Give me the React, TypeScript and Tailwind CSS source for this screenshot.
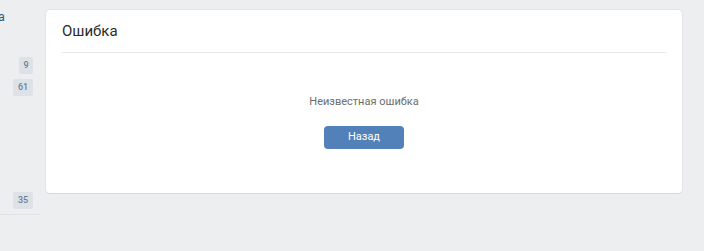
export default function App() {
  return (
    <div
      className="flex h-[251px] w-[704px] overflow-hidden bg-[#edeef0]"
      style={{ fontFamily: "Roboto, 'Open Sans', 'Liberation Sans', sans-serif" }}
    >
      {/* левое меню */}
      <div className="flex w-[40px] shrink-0 flex-col">
        <div className="-ml-[2px] mt-[9px] h-[15px] text-[12.5px] leading-[15px] text-[#2a5885]">а</div>
        <div className="flex flex-col items-end gap-[5px] pr-[7px] pt-[33px]">
          <span className="flex h-[17px] min-w-[14px] items-center justify-center rounded-[2px] bg-[#dde2e8] px-[4px] text-[9px] font-medium text-[#6c7f95]">
            9
          </span>
          <span className="flex h-[17px] min-w-[20px] items-center justify-center rounded-[2px] bg-[#dde2e8] px-[4px] text-[9px] font-medium text-[#6c7f95]">
            61
          </span>
        </div>
        <div className="flex flex-col items-end pr-[7px] pt-[96px]">
          <span className="flex h-[17px] min-w-[20px] items-center justify-center rounded-[2px] bg-[#dde2e8] px-[4px] text-[9px] font-medium text-[#6c7f95]">
            35
          </span>
        </div>
        <div className="mt-[5px] h-px w-[40px] bg-[#e1e3e6]" />
      </div>

      {/* карточка */}
      <div className="ml-[6px] mt-[10px] h-[183px] w-[636px] rounded-[4px] bg-white shadow-[0_1px_0_0_#d7d8db,0_0_0_1px_#e3e4e8]">
        <div className="mx-[16px] border-b border-[#e7e8ec] pb-[11px] pt-[11px] text-[15px] leading-[20px] text-[#2b2b2b]">
          Ошибка
        </div>
        <div className="flex flex-col items-center pt-[41px]">
          <div className="text-[11px] leading-[16px] text-[#6d6d6d]">Неизвестная ошибка</div>
          <button className="mt-[16px] flex h-[23px] w-[80px] items-center justify-center rounded-[4px] bg-[#5181b8] text-[11px] text-white">
            Назад
          </button>
        </div>
      </div>
    </div>
  );
}
